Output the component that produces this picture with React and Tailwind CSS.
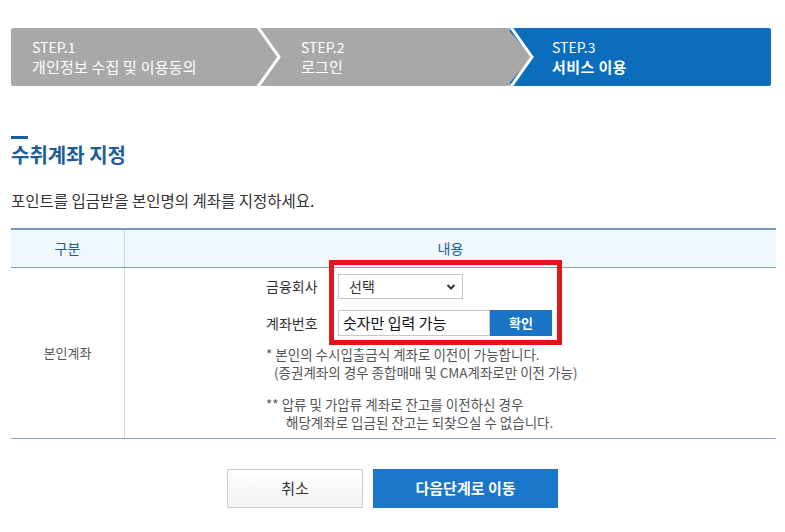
import React from "react";

const FONT = { fontFamily: '"Noto Sans CJK KR", "Noto Sans", sans-serif' };

function Chevron({ left, fill }) {
  return (
    <svg
      className="absolute top-0 z-10"
      style={{ left }}
      width="30"
      height="58"
      viewBox="0 0 30 58"
    >
      <polygon points="0,0 25,29 0,58" fill={fill} />
      <polyline points="3,-2 25,29 3,60" fill="none" stroke="#ffffff" strokeWidth="3" />
    </svg>
  );
}

export default function App() {
  return (
    <div className="w-[785px] h-[532px] bg-white overflow-hidden text-[#333]" style={FONT}>
      {/* Step bar */}
      <div className="pt-[28px] px-[11px] w-[785px]">
        <div className="relative flex h-[58px] w-[760px] rounded-[2px] overflow-hidden">
          <div className="w-[246px] bg-[#a8a8a8] flex flex-col justify-center pl-[21px] text-white leading-[19px]">
            <span className="text-[14px]">STEP.1</span>
            <span className="text-[15px] tracking-[0.2px]">개인정보 수집 및 이용동의</span>
          </div>
          <div className="w-[253px] bg-[#a8a8a8] flex flex-col justify-center pl-[44px] text-white leading-[19px]">
            <span className="text-[14px]">STEP.2</span>
            <span className="text-[15px] tracking-[0.2px]">로그인</span>
          </div>
          <div className="flex-1 bg-[#0c6dbd] flex flex-col justify-center pl-[42px] text-white leading-[19px]">
            <span className="text-[14px]">STEP.3</span>
            <span className="text-[15px] tracking-[0.4px] font-bold">서비스 이용</span>
          </div>
          <Chevron left={243} fill="#a8a8a8" />
          <Chevron left={496} fill="#a8a8a8" />
        </div>
      </div>

      {/* Heading */}
      <div className="px-[11px]">
        <div className="mt-[50px] w-[17px] h-[3px] bg-[#1a5f9c]" />
        <h2 className="mt-[2px] text-[20px] leading-[28px] font-bold text-[#1d5e98]">수취계좌 지정</h2>
        <p className="mt-[20px] text-[15.5px] leading-[22px] text-[#333]">포인트를 입금받을 본인명의 계좌를 지정하세요.</p>

        {/* Table */}
        <div className="mt-[17px] w-[765px] border-t-2 border-t-[#6f9db6] border-b border-b-[#7fa6bc]">
          <div className="flex h-[38px] bg-[#f1f8fd] border-b border-b-[#7da8c1] text-[14px] text-[#1d5e98]">
            <div className="w-[114px] flex items-center justify-center border-r border-r-[#c2d9e6]">구분</div>
            <div className="flex-1 flex items-center justify-center">내용</div>
          </div>
          <div className="flex h-[170px]">
            <div className="w-[114px] flex items-center justify-center border-r border-r-[#c2d9e6] text-[13px] text-[#555]">본인계좌</div>
            <div className="flex-1 pl-[141px] pt-[6px]">
              <div className="relative">
                <div className="flex items-center h-[25px]">
                  <span className="w-[72px] text-[14px] text-[#333]">금융회사</span>
                  <div className="w-[125px] h-[25px] border border-[#c8c8c8] bg-white flex items-center justify-between pl-[10px] pr-[6px] text-[14px] text-[#333]">
                    <span>선택</span>
                    <svg width="10" height="8" viewBox="0 0 10 8">
                      <polyline points="1.5,2 5,5.5 8.5,2" fill="none" stroke="#333" strokeWidth="2" />
                    </svg>
                  </div>
                </div>
                <div className="flex items-center h-[26px] mt-[11px]">
                  <span className="w-[72px] text-[14px] text-[#333]">계좌번호</span>
                  <div className="w-[152px] h-[26px] border border-[#c8c8c8] bg-white flex items-center pl-[4px] text-[15px] text-[#111]">숫자만 입력 가능</div>
                  <div className="w-[62px] h-[26px] bg-[#1a73c4] flex items-center justify-center text-[13px] font-bold text-white">확인</div>
                </div>
                <div className="mt-[9px] text-[13.5px] leading-[18px] text-[#555]">
                  <p>* 본인의 수시입출금식 계좌로 이전이 가능합니다.</p>
                  <p className="pl-[8px]">(증권계좌의 경우 종합매매 및 CMA계좌로만 이전 가능)</p>
                  <p className="mt-[14px]">** 압류 및 가압류 계좌로 잔고를 이전하신 경우</p>
                  <p className="pl-[20px]">해당계좌로 입금된 잔고는 되찾으실 수 없습니다.</p>
                </div>
                <div className="absolute left-[63px] top-[-14px] w-[233px] h-[85px] border-[5px] border-[#e3151c]" />
              </div>
            </div>
          </div>
        </div>
      </div>

      {/* Buttons */}
      <div className="mt-[30px] flex justify-center gap-[10px]">
        <div className="w-[136px] h-[39px] border border-[#cccccc] bg-gradient-to-b from-white to-[#f2f2f2] flex items-center justify-center text-[15px] text-[#333]">취소</div>
        <div className="w-[185px] h-[39px] bg-[#1a76c8] flex items-center justify-center text-[15px] font-bold text-white">다음단계로 이동</div>
      </div>
    </div>
  );
}
